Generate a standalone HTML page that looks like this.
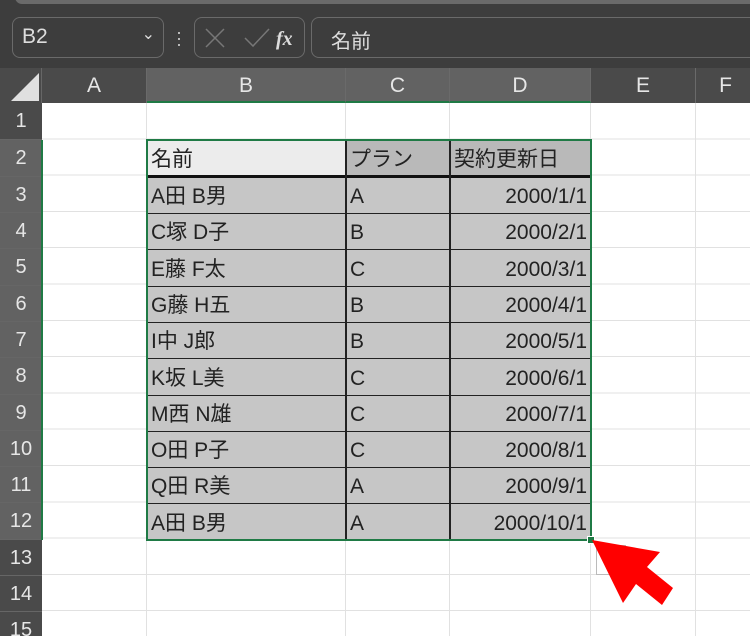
<!DOCTYPE html>
<html><head><meta charset="utf-8"><style>
*{margin:0;padding:0;box-sizing:border-box}
html,body{width:750px;height:636px;overflow:hidden}
body{background:#fff;position:relative;font-family:"Liberation Sans","Noto Sans CJK JP",sans-serif}
.a{position:absolute}
.top{left:0;top:0;width:750px;height:68px;background:#3d3d3d}
.box{position:absolute;border:1px solid #6a6a6a;border-radius:8px;top:17px;height:41px;color:#ddd}
.ch{position:absolute;top:68px;height:35px;background:#4a4a4a;color:#e6e6e6;font-size:21px;text-align:center;line-height:35px;border-right:1px solid #6a6a6a}
.ch.s{background:#626262;border-bottom:2px solid #1f7a45}
.rh{position:absolute;left:0;width:42px;background:#4a4a4a;color:#e6e6e6;font-size:20px;text-align:center;border-bottom:1px solid #666}
.rh.s{background:#626262}
.c{position:absolute;font-size:21px;color:#222;padding:2px 4px 0;white-space:nowrap;height:36px;line-height:36px}
.r{width:141px;text-align:right}
</style></head><body>
<div class="a top"></div>
<div class="a" style="left:15px;top:-10px;width:760px;height:14px;background:#6a6a6a;border-radius:7px"></div>
<div class="box" style="left:12px;width:152px"><span class="a" style="left:9px;top:7px;font-size:21px">B2</span><span class="a" style="right:8px;top:6px;font-size:16px">&#8964;</span></div>
<div class="a" style="left:176px;top:29px;color:#ccc;font-size:18px;line-height:6px">·<br>·<br>·</div>
<div class="box" style="left:194px;width:111px">
<svg class="a" style="left:8px;top:8px" width="90" height="24"><path d="M3 3L21 21M21 3L3 21" stroke="#777" stroke-width="1.5" fill="none"/><path d="M42 12L50 20L66 3" stroke="#777" stroke-width="1.5" fill="none"/><text x="73" y="19" fill="#ddd" font-family="Liberation Serif" font-style="italic" font-weight="bold" font-size="20">fx</text></svg></div>
<div class="box" style="left:311px;width:460px"><span class="a" style="left:19px;top:7px;font-size:20px">名前</span></div>

<div class="a" style="left:42px;top:103px;width:708px;height:533px;background:#fff"></div>
<div class="a" style="left:0;top:68px;width:42px;height:35px;background:#4a4a4a;border-right:1px solid #666"></div>
<svg class="a" style="left:10px;top:72px" width="30" height="30"><path d="M29 1V29H1Z" fill="#e0e0e0"/></svg>
<div class="ch" style="left:42px;width:105px">A</div>
<div class="ch s" style="left:147px;width:199px">B</div>
<div class="ch s" style="left:346px;width:104px">C</div>
<div class="ch s" style="left:450px;width:141px">D</div>
<div class="ch" style="left:591px;width:105px">E</div>
<div class="ch" style="left:696px;width:60px">F</div>
<div class="a" style="left:146px;top:103px;width:1px;height:533px;background:#e1e1e1"></div>
<div class="a" style="left:345px;top:103px;width:1px;height:533px;background:#e1e1e1"></div>
<div class="a" style="left:449px;top:103px;width:1px;height:533px;background:#e1e1e1"></div>
<div class="a" style="left:590px;top:103px;width:1px;height:533px;background:#e1e1e1"></div>
<div class="a" style="left:695px;top:103px;width:1px;height:533px;background:#e1e1e1"></div>
<div class="a" style="left:42px;top:103px;width:708px;height:533px;background:repeating-linear-gradient(to bottom,transparent 0,transparent 35.3px,#e1e1e1 35.3px,#e1e1e1 36.3px)"></div>
<div class="rh" style="top:103px;height:37px;line-height:37px">1</div>
<div class="rh s" style="top:140px;height:37px;line-height:37px">2</div>
<div class="rh s" style="top:177px;height:36px;line-height:36px">3</div>
<div class="rh s" style="top:213px;height:36px;line-height:36px">4</div>
<div class="rh s" style="top:249px;height:37px;line-height:37px">5</div>
<div class="rh s" style="top:286px;height:36px;line-height:36px">6</div>
<div class="rh s" style="top:322px;height:36px;line-height:36px">7</div>
<div class="rh s" style="top:358px;height:37px;line-height:37px">8</div>
<div class="rh s" style="top:395px;height:36px;line-height:36px">9</div>
<div class="rh s" style="top:431px;height:36px;line-height:36px">10</div>
<div class="rh s" style="top:467px;height:36px;line-height:36px">11</div>
<div class="rh s" style="top:503px;height:37px;line-height:37px">12</div>
<div class="rh" style="top:540px;height:36px;line-height:36px">13</div>
<div class="rh" style="top:576px;height:36px;line-height:36px">14</div>
<div class="rh" style="top:612px;height:36px;line-height:36px">15</div>
<div class="a" style="left:41px;top:140px;width:2px;height:400px;background:#1f7a45"></div>

<div class="a" style="left:147px;top:140px;width:444px;height:400px;background:#c6c6c6"></div>
<div class="a" style="left:147px;top:140px;width:444px;height:36px;background:#b9b9b9"></div>
<div class="a" style="left:147px;top:140px;width:199px;height:36px;background:#ececec"></div>
<div class="a" style="left:147px;top:175px;width:444px;height:3px;background:#111"></div>
<div class="a" style="left:147px;top:213px;width:444px;height:1px;background:#222"></div>
<div class="a" style="left:147px;top:249px;width:444px;height:1px;background:#222"></div>
<div class="a" style="left:147px;top:286px;width:444px;height:1px;background:#222"></div>
<div class="a" style="left:147px;top:322px;width:444px;height:1px;background:#222"></div>
<div class="a" style="left:147px;top:358px;width:444px;height:1px;background:#222"></div>
<div class="a" style="left:147px;top:395px;width:444px;height:1px;background:#222"></div>
<div class="a" style="left:147px;top:431px;width:444px;height:1px;background:#222"></div>
<div class="a" style="left:147px;top:467px;width:444px;height:1px;background:#222"></div>
<div class="a" style="left:147px;top:503px;width:444px;height:1px;background:#222"></div>
<div class="a" style="left:345px;top:140px;width:1.5px;height:400px;background:#222"></div>
<div class="a" style="left:449px;top:140px;width:1.5px;height:400px;background:#222"></div>
<div class="a" style="left:146px;top:139px;width:446px;height:402px;border:2px solid #1f7a45"></div>
<div class="a" style="left:596px;top:545px;width:30px;height:30px;border:1px solid #bbb;background:#fff"></div>
<div class="a" style="left:587px;top:536px;width:8px;height:8px;background:#1f7a45;border:1px solid #fff"></div>

<div class="c" style="left:147px;top:140px">名前</div>
<div class="c" style="left:346px;top:140px">プラン</div>
<div class="c" style="left:450px;top:140px">契約更新日</div>

<div class="c" style="left:147px;top:177px">A田 B男</div><div class="c" style="left:346px;top:177px">A</div><div class="c r" style="left:450px;top:177px">2000/1/1</div>
<div class="c" style="left:147px;top:213px">C塚 D子</div><div class="c" style="left:346px;top:213px">B</div><div class="c r" style="left:450px;top:213px">2000/2/1</div>
<div class="c" style="left:147px;top:250px">E藤 F太</div><div class="c" style="left:346px;top:250px">C</div><div class="c r" style="left:450px;top:250px">2000/3/1</div>
<div class="c" style="left:147px;top:286px">G藤 H五</div><div class="c" style="left:346px;top:286px">B</div><div class="c r" style="left:450px;top:286px">2000/4/1</div>
<div class="c" style="left:147px;top:322px">I中 J郎</div><div class="c" style="left:346px;top:322px">B</div><div class="c r" style="left:450px;top:322px">2000/5/1</div>
<div class="c" style="left:147px;top:359px">K坂 L美</div><div class="c" style="left:346px;top:359px">C</div><div class="c r" style="left:450px;top:359px">2000/6/1</div>
<div class="c" style="left:147px;top:395px">M西 N雄</div><div class="c" style="left:346px;top:395px">C</div><div class="c r" style="left:450px;top:395px">2000/7/1</div>
<div class="c" style="left:147px;top:431px">O田 P子</div><div class="c" style="left:346px;top:431px">C</div><div class="c r" style="left:450px;top:431px">2000/8/1</div>
<div class="c" style="left:147px;top:467px">Q田 R美</div><div class="c" style="left:346px;top:467px">A</div><div class="c r" style="left:450px;top:467px">2000/9/1</div>
<div class="c" style="left:147px;top:504px">A田 B男</div><div class="c" style="left:346px;top:504px">A</div><div class="c r" style="left:450px;top:504px">2000/10/1</div>

<svg class="a" style="left:0;top:0" width="750" height="636"><path d="M592 540L660 552L647 567L673 588L662 605L636 584L623 603Z" fill="#ff0000"/></svg>
</body></html>
